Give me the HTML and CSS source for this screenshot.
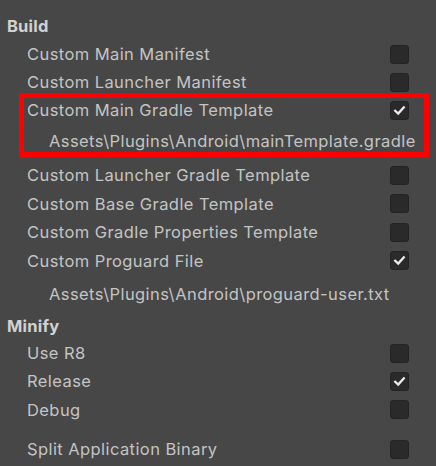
FILE: index.html
```html
<!DOCTYPE html>
<html>
<head>
<meta charset="utf-8">
<link rel="stylesheet" href="styles.css">
</head>
<body>
<div class="panel">
  <div class="header h-build">Build</div>
  <div class="row r1"><span class="label">Custom Main Manifest</span><span class="cb"></span></div>
  <div class="row r2"><span class="label">Custom Launcher Manifest</span><span class="cb"></span></div>
  <div class="group">
    <div class="row r3"><span class="label">Custom Main Gradle Template</span><span class="cb checked"><svg viewBox="0 0 19 19"><path d="M5.2 9.8 L8.2 12.6 L13.8 6.4"/></svg></span></div>
    <div class="path p1">Assets\Plugins\Android\mainTemplate.gradle</div>
  </div>
  <div class="row"><span class="label">Custom Launcher Gradle Template</span><span class="cb"></span></div>
  <div class="row"><span class="label">Custom Base Gradle Template</span><span class="cb"></span></div>
  <div class="row"><span class="label">Custom Gradle Properties Template</span><span class="cb"></span></div>
  <div class="row"><span class="label">Custom Proguard File</span><span class="cb checked"><svg viewBox="0 0 19 19"><path d="M5.2 9.8 L8.2 12.6 L13.8 6.4"/></svg></span></div>
  <div class="path p2">Assets\Plugins\Android\proguard-user.txt</div>
  <div class="header h-minify">Minify</div>
  <div class="row r-r8"><span class="label">Use R8</span><span class="cb"></span></div>
  <div class="row"><span class="label">Release</span><span class="cb checked"><svg viewBox="0 0 19 19"><path d="M5.2 9.8 L8.2 12.6 L13.8 6.4"/></svg></span></div>
  <div class="row"><span class="label">Debug</span><span class="cb"></span></div>
  <div class="row r-split"><span class="label">Split Application Binary</span><span class="cb"></span></div>
</div>
</body>
</html>
```
FILE: styles.css
```css
html, body {
  margin: 0;
  padding: 0;
  background: #474747;
  width: 436px;
  height: 466px;
  overflow: hidden;
}
.panel {
  display: flex;
  flex-direction: column;
  padding: 12px 27px 0 7px;
  font-family: Inter, "Noto Sans", sans-serif;
  font-size: 16.5px;
  letter-spacing: 0.42px;
  color: #c4c4c4;
}
.header {
  display: flex;
  align-items: center;
  font-weight: 700;
  letter-spacing: 0.2px;
  color: #d2d2d2;
}
.h-build { height: 28px; }
.h-minify { height: 26px; }
.row {
  display: flex;
  align-items: center;
  justify-content: space-between;
  height: 28.5px;
  padding-left: 20px;
}
.r1 { height: 28px; }
.r3 { height: 27px; }
.r-r8 { height: 28px; }
.r-split { margin-top: 11px; }
.label { white-space: nowrap; }
.cb {
  width: 19px;
  height: 19px;
  box-sizing: border-box;
  background: #2a2a2a;
  border: 1px solid #232323;
  border-radius: 3px;
  display: flex;
  align-items: center;
  justify-content: center;
  flex: none;
}
.cb svg {
  width: 19px;
  height: 19px;
  flex: none;
}
.cb path {
  fill: none;
  stroke: #ececec;
  stroke-width: 2.3;
  stroke-linecap: square;
  stroke-linejoin: miter;
}
.path {
  display: flex;
  align-items: center;
  padding-left: 42px;
  white-space: nowrap;
}
.p1 { height: 37.5px; padding-bottom: 3px; box-sizing: border-box; }
.p2 { height: 38px; }
.group { position: relative; }
.group::after {
  content: "";
  position: absolute;
  left: 12px;
  right: -20px;
  top: -3.5px;
  bottom: 4px;
  border: 5px solid #ff0000;
  pointer-events: none;
}
```
